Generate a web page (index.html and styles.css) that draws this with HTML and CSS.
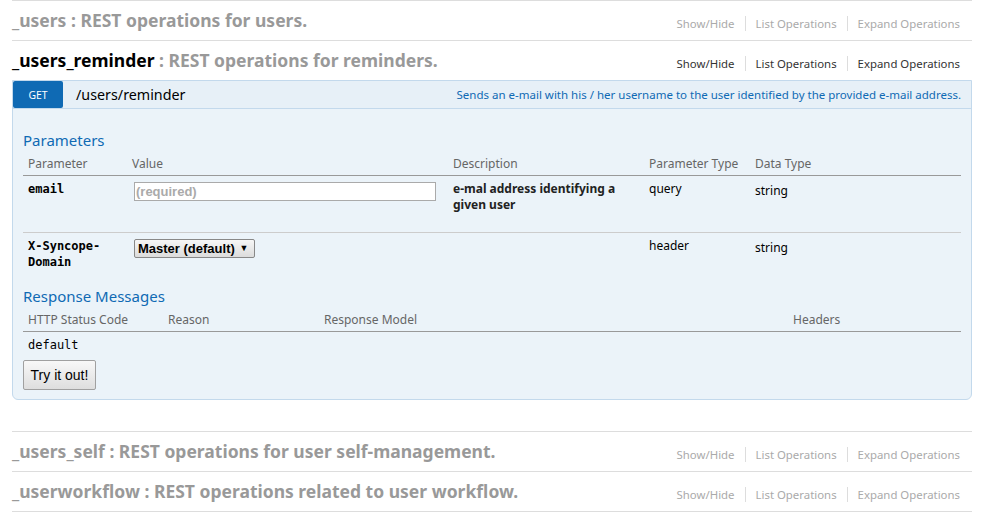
FILE: index.html
```html
<!DOCTYPE html>
<html lang="en">
<head>
<meta charset="utf-8">
<title>Swagger resources</title>
<link rel="stylesheet" href="styles.css">
</head>
<body>
<div class="wrap">
  <ul class="resources">
    <li class="resource">
      <div class="heading">
        <h2><span class="name">_users</span> : REST operations for users.</h2>
        <ul class="options">
          <li>Show/Hide</li>
          <li>List Operations</li>
          <li>Expand Operations</li>
        </ul>
      </div>
    </li>
    <li class="resource active">
      <div class="heading">
        <h2><span class="name">_users_reminder</span> : REST operations for reminders.</h2>
        <ul class="options">
          <li>Show/Hide</li>
          <li>List Operations</li>
          <li>Expand Operations</li>
        </ul>
      </div>
      <div class="endpoints">
        <div class="operation">
          <div class="op-heading">
            <span class="method">GET</span>
            <span class="path">/users/reminder</span>
            <span class="summary">Sends an e-mail with his / her username to the user identified by the provided e-mail address.</span>
          </div>
          <div class="op-content">
            <h4 class="section-title first">Parameters</h4>
            <table class="params">
              <colgroup>
                <col class="c-param"><col class="c-value"><col class="c-desc"><col class="c-ptype"><col class="c-dtype">
              </colgroup>
              <thead>
                <tr><th>Parameter</th><th>Value</th><th>Description</th><th>Parameter Type</th><th>Data Type</th></tr>
              </thead>
              <tbody>
                <tr class="row-first">
                  <td class="code">email</td>
                  <td><input class="text-input" type="text" placeholder="(required)"></td>
                  <td class="desc">e-mal address identifying a given user</td>
                  <td>query</td>
                  <td class="dtype">string</td>
                </tr>
                <tr class="row-last">
                  <td class="code">X-Syncope-<br>Domain</td>
                  <td><span class="select">Master (default) <span class="arrow">▼</span></span></td>
                  <td class="desc"></td>
                  <td>header</td>
                  <td class="dtype">string</td>
                </tr>
              </tbody>
            </table>
            <h4 class="section-title second">Response Messages</h4>
            <table class="responses">
              <colgroup>
                <col class="c-code"><col class="c-reason"><col class="c-model"><col class="c-headers">
              </colgroup>
              <thead>
                <tr><th>HTTP Status Code</th><th>Reason</th><th>Response Model</th><th>Headers</th></tr>
              </thead>
              <tbody>
                <tr class="row-resp"><td class="code plain">default</td><td></td><td></td><td></td></tr>
              </tbody>
            </table>
            <div class="submit"><button class="try" type="button">Try it out!</button></div>
          </div>
        </div>
      </div>
    </li>
    <li class="resource">
      <div class="heading">
        <h2><span class="name">_users_self</span> : REST operations for user self-management.</h2>
        <ul class="options">
          <li>Show/Hide</li>
          <li>List Operations</li>
          <li>Expand Operations</li>
        </ul>
      </div>
    </li>
    <li class="resource">
      <div class="heading">
        <h2><span class="name">_userworkflow</span> : REST operations related to user workflow.</h2>
        <ul class="options">
          <li>Show/Hide</li>
          <li>List Operations</li>
          <li>Expand Operations</li>
        </ul>
      </div>
    </li>
  </ul>
</div>
</body>
</html>
```

FILE: styles.css
```css
* { box-sizing: border-box; }
html, body { margin: 0; padding: 0; background: #fff; }
body {
  font-family: "Noto Sans", "Open Sans", sans-serif;
  font-size: 13px;
  color: #333;
}
.wrap { margin-left: 12px; width: 960px; }
.resources { list-style: none; margin: 0; padding: 0; border-top: 1px solid #ddd; }
.resource { border-bottom: 1px solid #ddd; }
.heading { display: flex; justify-content: space-between; height: 39px; }
.heading h2 {
  margin: 0;
  font-size: 17.5px;
  font-weight: bold;
  line-height: 39px;
  color: #999;
}
.active .heading h2 .name { color: #000; }
.options {
  list-style: none; margin: 15px 2px 0 0; padding: 0;
  display: flex; height: 15px;
}
.options li {
  font-size: 11.4px; line-height: 15px; color: #aaa;
  padding: 0 10px; border-left: 1px solid #ddd;
}
.options li:first-child { border-left: none; }
.active .options li { color: #333; }

.endpoints { padding-bottom: 31px; }
.operation {
  background: #ebf3f9;
  border: 1px solid #c3d9ec;
  border-radius: 0 0 6px 6px;
}
.op-heading {
  display: flex; align-items: flex-start;
  height: 28px;
  background: #e7f0f7;
  border-bottom: 1px solid #c3d9ec;
}
.method {
  width: 50px; height: 27px;
  background: #0f6ab4; color: #fff;
  border-radius: 2px;
  font-size: 10.4px; line-height: 27px; padding-top: 1px;
  text-align: center;
}
.path { margin-left: 13px; font-size: 14.3px; line-height: 27px; color: #000; }
.summary { margin-left: auto; padding-right: 10px; font-size: 11.5px; line-height: 27px; color: #0f6ab4; }

.op-content { padding: 10px 10px 9px; }
.section-title {
  margin: 12px 0 2px; font-size: 15px; line-height: 18px; font-weight: normal; color: #0f6ab4;
}
.section-title.second { margin-bottom: 3px; }
table { width: 100%; border-collapse: collapse; table-layout: fixed; }
th {
  text-align: left; font-weight: normal; color: #666;
  font-size: 12px; line-height: 14px; padding: 6px 5px 4px;
  border-bottom: 1px solid #999;
}
.responses th { padding: 5px 5px 4px; }
td {
  vertical-align: top; font-size: 12px; line-height: 16px; padding: 5px 5px; color: #000;
}
.c-param { width: 104px; }
.c-value { width: 321px; }
.c-desc { width: 196px; }
.c-ptype { width: 106px; }
.c-dtype { width: auto; }
.c-code { width: 140px; }
.c-reason { width: 156px; }
.c-model { width: 469px; }
.c-headers { width: auto; }
.row-first td { height: 57px; border-bottom: 1px solid #ccc; }
.row-last td { height: 42px; }
.row-resp td { padding-bottom: 0; }
.code { font-family: "DejaVu Sans Mono", monospace; font-weight: bold; font-size: 12px; }
.code.plain { font-weight: normal; }
.desc { font-weight: bold; color: #222; }
.dtype { padding-top: 7px; }
.text-input {
  display: block; margin: 1px 0 0 2px;
  width: 302px; height: 19px;
  border: 1px solid #aaa; background: #fff;
  font-family: "Liberation Sans", Arial, sans-serif; font-size: 13px; font-weight: bold;
  padding: 0 1px;
}
.text-input::placeholder { color: #aaa; }
.select {
  display: inline-block; margin: 1px 0 0 2px;
  width: 121px; height: 19px; white-space: nowrap;
  border: 1px solid #888; border-radius: 2px;
  background: linear-gradient(#f6f6f6, #dcdcdc);
  font-family: "Liberation Sans", Arial, sans-serif; font-size: 13px; font-weight: bold;
  line-height: 17px; padding: 0 3px; color: #000;
}
.select .arrow { font-size: 9px; vertical-align: 2px; margin-left: 1px; }
.submit { padding-top: 7px; }
.try {
  display: block;
  width: 73px; height: 30px;
  border: 1px solid #a0a0a0; border-radius: 2px;
  background: linear-gradient(#f8f8f8, #dedede);
  font-family: "Liberation Sans", Arial, sans-serif; font-size: 14px; color: #000;
  padding: 0;
}
```
